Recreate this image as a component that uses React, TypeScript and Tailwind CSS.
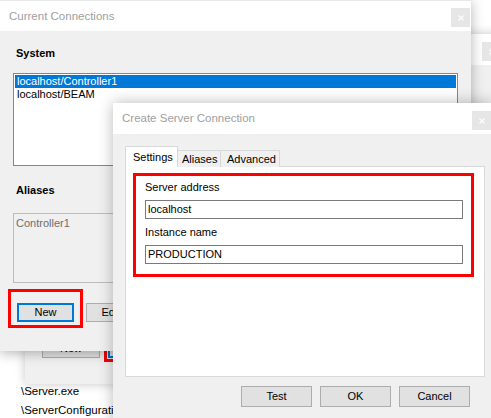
import React from "react";

function CloseBtn() {
  return (
    <div className="w-[19px] h-[19px] bg-[#e6e6e6] flex items-center justify-center shrink-0">
      <svg width="6" height="6" viewBox="0 0 6 6">
        <path d="M0.5 0.5 L5.5 5.5 M5.5 0.5 L0.5 5.5" stroke="#fbfbfb" strokeWidth="1.4" />
      </svg>
    </div>
  );
}

function Btn({ label, w, focused }: { label: string; w: string; focused?: boolean }) {
  return (
    <div
      className={
        (focused ? "border-2 border-[#0078d7] " : "border border-[#adadad] ") +
        w +
        " bg-[#e1e1e1] flex items-center justify-center leading-[13px] text-black shrink-0"
      }
    >
      {label}
    </div>
  );
}

export default function App() {
  return (
    <div className="relative w-[491px] h-[418px] overflow-hidden bg-white font-['Liberation_Sans',Arial,sans-serif] text-[11px] text-black">
      {/* explorer list behind */}
      <div className="absolute left-[21px] top-[382px] flex flex-col leading-[19px] text-[11.5px] text-black">
        <span>\Server.exe</span>
        <span>\ServerConfiguration.exe</span>
      </div>

      {/* Window 0 (back copy) */}
      <div className="absolute left-[25px] top-[34px] w-[480px] h-[350px] bg-[#f0f0f0] shadow-[0_0_10px_rgba(0,0,0,0.22)] flex flex-col">
        <div className="h-[31px] bg-white flex items-start justify-end pt-[8px] pr-[4px]">
          <CloseBtn />
        </div>
        <div className="pt-[273px] pl-[17px] flex gap-[4px]">
          <Btn label="New" w="w-[58px] h-[20px]" />
          <div className="w-[40px] h-[28px] -mt-[4px] border-[3px] border-[#ff0000] p-[1px]">
            <div className="w-full h-full border-2 border-[#0078d7]" />
          </div>
        </div>
      </div>

      {/* Window 1: Current Connections */}
      <div className="absolute left-0 top-0 w-[471px] h-[351px] bg-[#f0f0f0] border-t border-[#e9e9e9] shadow-[0_2px_12px_rgba(0,0,0,0.3)] flex flex-col">
        <div className="h-[30px] bg-white flex items-start justify-between pl-[9px] pr-[1px]">
          <span className="mt-[9px] text-[11.5px] leading-[13px] text-[#a0a0a0]">Current Connections</span>
          <div className="mt-[7px]">
            <CloseBtn />
          </div>
        </div>
        <div className="px-[13px] flex flex-col">
          <div className="mt-[16px] pl-[3px] font-bold leading-[13px]">System</div>
          <div className="mt-[13px] h-[93px] border border-[#828790] bg-white p-[1px] flex flex-col">
            <div className="h-[13px] leading-[13px] bg-[#0078d7] text-white pl-[2px]">localhost/Controller1</div>
            <div className="h-[13px] leading-[13px] pl-[2px]">localhost/BEAM</div>
          </div>
          <div className="mt-[18px] pl-[3px] font-bold leading-[13px]">Aliases</div>
          <div className="mt-[16px] h-[70px] border border-[#bcbcbc] bg-[#f0f0f0] pt-[3px] pl-[2px]">
            <div className="leading-[13px] text-[#6d6d6d]">Controller1</div>
          </div>
          <div className="mt-[20px] pl-[4px] flex gap-[12px]">
            <div className="relative">
              <Btn label="New" w="w-[57px] h-[19px]" focused />
              <div className="absolute left-[-9px] top-[-14px] w-[75px] h-[39px] border-[3px] border-[#ff0000]" />
            </div>
            <Btn label="Edit" w="w-[50px] h-[19px]" />
          </div>
        </div>
      </div>

      {/* Window 2: Create Server Connection */}
      <div className="absolute left-[113px] top-[103px] w-[379px] h-[330px] bg-[#f0f0f0] shadow-[0_0_14px_rgba(0,0,0,0.28)] flex flex-col">
        <div className="h-[31px] bg-white flex items-start justify-between pl-[9px] pr-[1px]">
          <span className="mt-[9px] text-[11.5px] leading-[13px] text-[#a0a0a0]">Create Server Connection</span>
          <div className="mt-[8px]">
            <CloseBtn />
          </div>
        </div>
        <div className="pl-[12px] pt-[12px] flex flex-col">
          <div className="flex items-end relative z-10">
            <div className="w-[53px] h-[21px] bg-white border border-b-0 border-[#d9d9d9] flex items-center pl-[7px] leading-[13px]">
              Settings
            </div>
            <div className="w-[43px] h-[17px] bg-[#f0f0f0] border border-l-0 border-b-0 border-[#d9d9d9] flex items-center pl-[4px] leading-[13px]">
              Aliases
            </div>
            <div className="w-[59px] h-[17px] bg-[#f0f0f0] border border-l-0 border-b-0 border-[#d9d9d9] flex items-center pl-[6px] leading-[13px]">
              Advanced
            </div>
          </div>
          <div className="-mt-px w-[360px] h-[211px] bg-white border border-[#d9d9d9] pt-[6px] pl-[7px]">
            <div className="w-[341px] h-[104px] border-[3px] border-[#ff0000] pl-[9px] pr-[8px] pt-[5px] flex flex-col">
              <div className="leading-[13px]">Server address</div>
              <div className="mt-[6px] h-[19px] border border-[#7a7a7a] bg-white flex items-center pl-[2px] leading-[13px]">
                localhost
              </div>
              <div className="mt-[7px] leading-[13px]">Instance name</div>
              <div className="mt-[6px] h-[19px] border border-[#7a7a7a] bg-white flex items-center pl-[2px] leading-[13px]">
                PRODUCTION
              </div>
            </div>
          </div>
          <div className="mt-[9px] w-[360px] pr-[15px] flex justify-end gap-[8px]">
            <Btn label="Test" w="w-[71px] h-[21px]" />
            <Btn label="OK" w="w-[71px] h-[21px]" />
            <Btn label="Cancel" w="w-[71px] h-[21px]" />
          </div>
        </div>
      </div>
    </div>
  );
}
